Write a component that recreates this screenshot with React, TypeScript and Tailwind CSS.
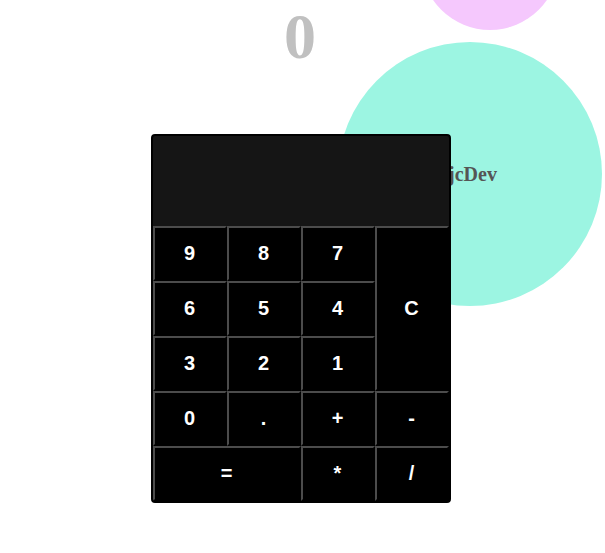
import React, { useState } from 'react'

const keys: { label: string; span?: string }[] = [
  { label: '9' },
  { label: '8' },
  { label: '7' },
  { label: 'C', span: 'row-span-3' },
  { label: '6' },
  { label: '5' },
  { label: '4' },
  { label: '3' },
  { label: '2' },
  { label: '1' },
  { label: '0' },
  { label: '.' },
  { label: '+' },
  { label: '-' },
  { label: '=', span: 'col-span-2' },
  { label: '*' },
  { label: '/' },
]

export default function App() {
  const [value] = useState('0')
  const [display] = useState('')

  return (
    <div className="relative w-full h-[553px] overflow-hidden bg-white font-['Liberation_Sans',Arial,sans-serif]">
      {/* bolhas decorativas */}
      <div className="absolute left-[421px] top-[-108px] w-[138px] h-[138px] rounded-full bg-[#f5c8fd]" />
      <div className="absolute left-[338px] top-[42px] w-[264px] h-[264px] rounded-full bg-[#9cf5e2] flex items-center justify-center">
        <span className="font-['Liberation_Serif',serif] font-bold text-[20px] text-[#555555] pl-[5px]">jcDev</span>
      </div>

      <div className="relative flex flex-col items-center">
        <h1 className="font-['Liberation_Serif',serif] font-bold text-[64px] leading-[74px] text-[#c0c0c0] mr-[5px]">
          {value}
        </h1>

        <div className="relative z-10 mt-[60px] ml-[-3px] w-[300px] border-2 border-black rounded-[4px] overflow-hidden bg-black">
          <div className="h-[90px] bg-[#151515] text-white text-right px-3">{display}</div>
          <div className="grid grid-cols-4 auto-rows-[55px]">
            {keys.map((k) => (
              <button
                key={k.label}
                className={`${k.span ?? ''} bg-black text-white font-bold text-[20px] leading-none pb-[2px] pr-[1px] border-2 border-t-[#4c4c4c] border-l-[#4c4c4c] border-r-black border-b-black`}
              >
                {k.label}
              </button>
            ))}
          </div>
        </div>
      </div>
    </div>
  )
}
